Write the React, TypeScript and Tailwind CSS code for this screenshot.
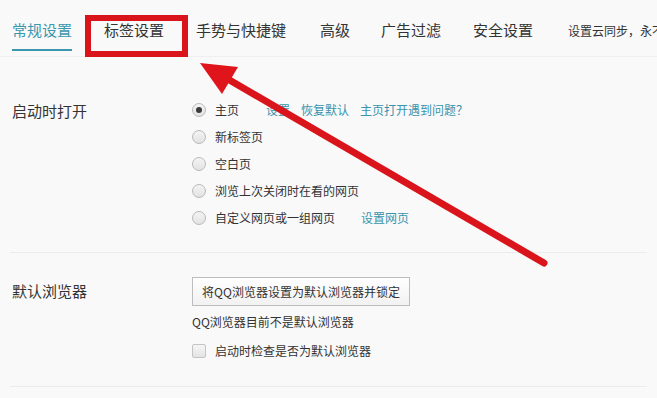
import React from 'react';

const tabs = [
  { label: '常规设置', ml: 'ml-3', active: true },
  { label: '标签设置', ml: 'ml-[32px]' },
  { label: '手势与快捷键', ml: 'ml-[32px]' },
  { label: '高级', ml: 'ml-[34px]' },
  { label: '广告过滤', ml: 'ml-[31px]' },
  { label: '安全设置', ml: 'ml-[32px]' },
];

const options = ['主页', '新标签页', '空白页', '浏览上次关闭时在看的网页', '自定义网页或一组网页'];

function Radio({ checked }: { checked?: boolean }) {
  return (
    <span className="flex h-[14px] w-[14px] items-center justify-center rounded-full border border-[#b9b9b9] bg-gradient-to-b from-[#f4f4f4] to-[#e2e2e2]">
      {checked && <span className="h-[6px] w-[6px] rounded-full bg-[#3b3b3b]" />}
    </span>
  );
}

export default function App() {
  return (
    <div className="relative h-[398px] w-[657px] overflow-hidden bg-[#f9f9f9] font-['Noto_Sans_CJK_SC',sans-serif] text-[#333]">
      {/* Onglets */}
      <div className="flex h-[57px] items-center overflow-hidden whitespace-nowrap border-b border-[#efefef] pt-[5px] text-[15px]">
        {tabs.map((t) => (
          <div key={t.label} className={`relative shrink-0 ${t.ml} ${t.active ? 'text-[#3a97ad]' : 'text-[#333]'}`}>
            {t.label}
            {t.active && <span className="absolute left-0 right-0 top-[30px] h-[2px] bg-[#3a97ad]" />}
          </div>
        ))}
        <div className="ml-[35px] shrink-0 text-[12px] text-[#333]">设置云同步，永不丢失</div>
      </div>

      {/* Démarrage */}
      <div className="mx-[10px] flex border-b border-[#ececec] pt-[42px] pb-[18px]">
        <div className="w-[182px] pl-[2px] pt-[1px] text-[15px] leading-[22px]">启动时打开</div>
        <div className="flex flex-col text-[12px]">
          {options.map((o, i) => (
            <div key={o} className="flex h-[27px] items-center gap-[9px] pb-[6px]">
              <Radio checked={i === 0} />
              <span>{o}</span>
              {i === 0 && (
                <span className="ml-[18px] flex gap-[11px] text-[#3a94ad]">
                  <span>设置</span>
                  <span>恢复默认</span>
                  <span>主页打开遇到问题？</span>
                </span>
              )}
              {i === 4 && <span className="ml-[17px] text-[#3a94ad]">设置网页</span>}
            </div>
          ))}
        </div>
      </div>

      {/* Navigateur par défaut */}
      <div className="mx-[10px] flex border-b border-[#ececec] pt-[24px] pb-[26px]">
        <div className="w-[182px] pl-[2px] pt-[3px] text-[15px] leading-[22px]">默认浏览器</div>
        <div className="flex flex-col text-[12px]">
          <button className="h-[29px] w-[218px] border border-[#bdbdbd] bg-gradient-to-b from-white to-[#f1f1f1] text-[12px] text-[#333]">
            将QQ浏览器设置为默认浏览器并锁定
          </button>
          <div className="mt-[8px] leading-[16px]">QQ浏览器目前不是默认浏览器</div>
          <div className="mt-[12px] flex items-center gap-[9px]">
            <span className="h-[14px] w-[14px] rounded-[2px] border border-[#c4c4c4] bg-gradient-to-b from-[#f6f6f6] to-[#e4e4e4]" />
            <span>启动时检查是否为默认浏览器</span>
          </div>
        </div>
      </div>

      {/* Annotations rouges */}
      <div className="pointer-events-none absolute left-[85px] top-[15px] h-[42px] w-[103px] border-[6px] border-[#d9141b]" />
      <svg className="pointer-events-none absolute left-0 top-0" width="657" height="398">
        <line x1="226" y1="78" x2="544" y2="263" stroke="#d9141b" strokeWidth="7" strokeLinecap="round" />
        <polygon points="200,63 238,67 222,94" fill="#e0151b" />
      </svg>
    </div>
  );
}
